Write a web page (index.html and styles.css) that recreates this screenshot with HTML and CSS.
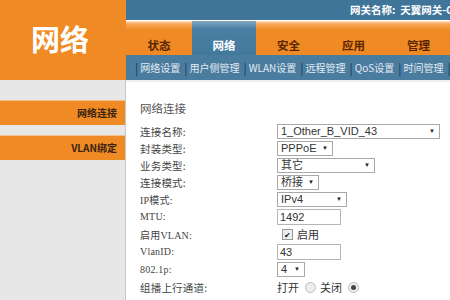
FILE: index.html
```html
<!DOCTYPE html>
<html>

<head>
    <meta charset="utf-8">
    <link rel="stylesheet" href="styles.css">
</head>

<body>
    <div class="header">
        <div class="logo">网络</div>
        <div class="header-right">
            <div class="topbar">网关名称:&nbsp; 天翼网关-GPON</div>
            <div class="tabs">
                <div class="tab">状态</div>
                <div class="tab active">网络</div>
                <div class="tab">安全</div>
                <div class="tab">应用</div>
                <div class="tab">管理</div>
            </div>
            <div class="subnav">
                <span class="sep">|</span><span class="link">网络设置</span>
                <span class="sep">|</span><span class="link">用户侧管理</span>
                <span class="sep">|</span><span class="link">WLAN设置</span>
                <span class="sep">|</span><span class="link">远程管理</span>
                <span class="sep">|</span><span class="link">QoS设置</span>
                <span class="sep">|</span><span class="link">时间管理</span>
                <span class="sep">|</span><span class="link">路由</span>
            </div>
        </div>
    </div>

    <div class="main">
        <div class="sidebar">
            <div class="side-item">网络连接</div>
            <div class="side-item">VLAN绑定</div>
        </div>
        <div class="content">
            <div class="title">网络连接</div>
            <div class="form">
                <div class="row">
                    <label>连接名称:</label>
                    <div class="select w-163">1_Other_B_VID_43<span class="arrow">▼</span></div>
                </div>
                <div class="row">
                    <label>封装类型:</label>
                    <div class="select w-55">PPPoE<span class="arrow">▼</span></div>
                </div>
                <div class="row">
                    <label>业务类型:</label>
                    <div class="select w-98">其它<span class="arrow">▼</span></div>
                </div>
                <div class="row">
                    <label>连接模式:</label>
                    <div class="select w-41">桥接<span class="arrow">▼</span></div>
                </div>
                <div class="row">
                    <label class="mono">IP模式:</label>
                    <div class="select w-70">IPv4<span class="arrow">▼</span></div>
                </div>
                <div class="row">
                    <label class="mono">MTU:</label>
                    <div class="input">1492</div>
                </div>
                <div class="row tall">
                    <label class="mono">启用VLAN:</label>
                    <div class="check-wrap"><span class="checkbox">✔</span>启用</div>
                </div>
                <div class="row">
                    <label class="mono">VlanID:</label>
                    <div class="input">43</div>
                </div>
                <div class="row tall">
                    <label class="mono">802.1p:</label>
                    <div class="select w-28">4<span class="arrow">▼</span></div>
                </div>
                <div class="row tall">
                    <label>组播上行通道:</label>
                    <div class="radios">打开<span class="radio"></span>关闭<span class="radio on"></span></div>
                </div>
            </div>
        </div>
    </div>
</body>

</html>
```

FILE: styles.css
```css
body {
    margin: 0;
    width: 450px;
    height: 300px;
    overflow: hidden;
    font-family: "Liberation Sans", "Noto Sans CJK SC", sans-serif;
    background-color: #fff;
}

.header {
    display: flex;
    height: 80px;
}

.logo {
    width: 126px;
    flex-shrink: 0;
    background-color: #f08a24;
    color: #fff;
    font-size: 29px;
    font-weight: bold;
    font-family: "Noto Sans CJK SC", sans-serif;
    text-align: center;
    line-height: 76px;
    padding-right: 6px;
    box-sizing: border-box;
}

.header-right {
    flex: 1;
    display: flex;
    flex-direction: column;
    min-width: 0;
}

.topbar {
    height: 20px;
    background-color: #40759a;
    color: #fff;
    font-size: 10.5px;
    font-weight: bold;
    line-height: 20px;
    padding-left: 224px;
    white-space: nowrap;
    overflow: hidden;
    font-family: "Noto Sans CJK SC", sans-serif;
}

.tabs {
    height: 35px;
    display: flex;
    background: linear-gradient(#fde2c4 0, #f7a75a 3px, #f08a24 9px, #f08a24 100%);
    border-top: 1px solid #fff;
    box-sizing: border-box;
}

.tab {
    width: 65px;
    flex-shrink: 0;
    text-align: center;
    font-size: 11.5px;
    font-weight: bold;
    color: #5a2600;
    padding-top: 16px;
    box-sizing: border-box;
    font-family: "Noto Sans CJK SC", sans-serif;
}

.tab:first-child {
    width: 66px;
}

.tab.active {
    width: 64px;
    background: linear-gradient(#7fa5c0 0, #4a7ea3 8px, #43789d 100%);
    color: #fff;
}

.subnav {
    height: 25px;
    display: flex;
    align-items: center;
    background-color: #4a7ca0;
    color: #e4ebf1;
    font-size: 10px;
    padding-left: 9px;
    white-space: nowrap;
    overflow: hidden;
    font-family: "Noto Sans CJK SC", sans-serif;
}

.subnav .sep {
    color: #1e3a52;
    font-size: 12px;
    margin: 0 2px 0 0;
}

.subnav .link {
    margin-right: 4px;
    flex-shrink: 0;
}

.main {
    display: flex;
    height: 220px;
}

.sidebar {
    width: 126px;
    flex-shrink: 0;
    background-color: #e7e7e7;
    border-right: 1px solid #c8c8c8;
    box-sizing: border-box;
    padding-top: 20px;
}

.side-item {
    height: 24px;
    margin-bottom: 10px;
    background-color: #f08a24;
    color: #3a2410;
    font-size: 10px;
    font-weight: bold;
    text-align: right;
    line-height: 24px;
    padding-right: 8px;
    font-family: "Noto Sans CJK SC", sans-serif;
    border-top: 1px solid #f6c08c;
}

.content {
    flex: 1;
    padding: 17px 0 0 14px;
    color: #444;
    border-top: 2px solid #eee;
}

.title {
    font-size: 11.5px;
    color: #555;
    height: 18px;
    line-height: 18px;
    font-family: "Noto Sans CJK SC", sans-serif;
}

.form {
    margin-top: 6px;
}

.row {
    display: flex;
    align-items: center;
    height: 17px;
}

.row.tall {
    height: 18px;
}

.row label {
    width: 137px;
    flex-shrink: 0;
    font-size: 10.5px;
    letter-spacing: 0.2px;
    color: #444;
    font-family: "Noto Sans CJK SC", sans-serif;
}

.row label.mono {
    font-family: "Liberation Serif", "Noto Sans CJK SC", serif;
    font-size: 10px;
}

.select {
    position: relative;
    height: 15px;
    border: 1px solid #a8a8a8;
    box-sizing: border-box;
    font-size: 11px;
    line-height: 13px;
    padding-left: 3px;
    color: #333;
    white-space: nowrap;
    font-family: "Liberation Sans", "Noto Sans CJK SC", sans-serif;
}

.arrow {
    position: absolute;
    right: 4px;
    top: 3px;
    font-size: 6px;
    line-height: 7px;
    color: #222;
}

.w-163 { width: 163px; }
.w-55 { width: 56px; }
.w-98 { width: 98px; }
.w-41 { width: 42px; }
.w-70 { width: 70px; }
.w-28 { width: 28px; }

.input {
    width: 64px;
    height: 16px;
    border: 1px solid #b5b5b5;
    box-sizing: border-box;
    font-size: 11px;
    line-height: 14px;
    padding-left: 2px;
    color: #333;
}

.check-wrap {
    display: flex;
    align-items: center;
    font-size: 11px;
    color: #333;
    padding-left: 5px;
    font-family: "Noto Sans CJK SC", sans-serif;
}

.checkbox {
    width: 9px;
    height: 9px;
    border: 1px solid #999;
    background-color: #eee;
    font-size: 8px;
    line-height: 9px;
    text-align: center;
    color: #222;
    margin-right: 4px;
}

.radios {
    display: flex;
    align-items: center;
    font-size: 11px;
    color: #333;
    font-family: "Noto Sans CJK SC", sans-serif;
}

.radio {
    width: 9px;
    height: 9px;
    border: 1px solid #bbb;
    border-radius: 50%;
    background-color: #eee;
    margin: 0 4px 0 6px;
    position: relative;
}

.radio.on::after {
    content: "";
    position: absolute;
    left: 2px;
    top: 2px;
    width: 5px;
    height: 5px;
    border-radius: 50%;
    background-color: #444;
}
```
